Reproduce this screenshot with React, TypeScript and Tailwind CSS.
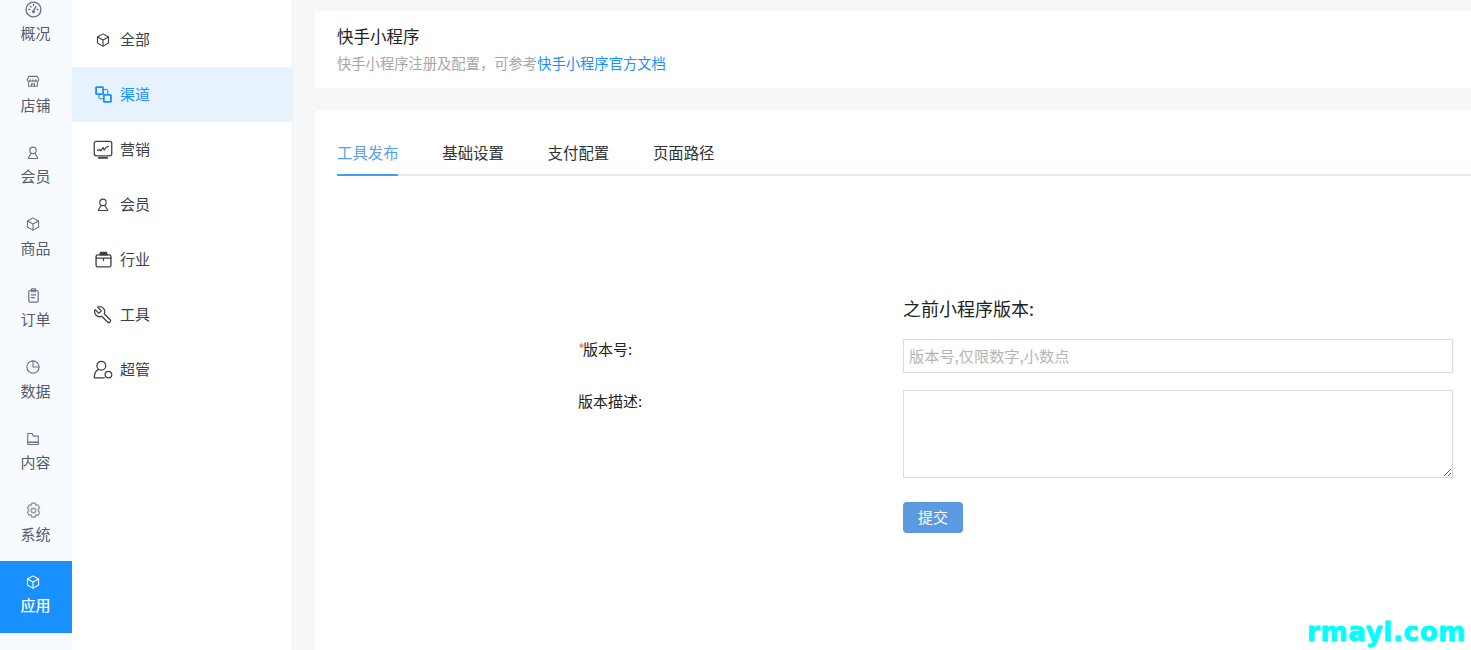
import { ReactNode } from "react";

const Svg = ({ children, className }: { children: ReactNode; className: string }) => (
  <svg
    viewBox="0 0 24 24"
    fill="none"
    stroke="currentColor"
    strokeWidth="1.9"
    strokeLinecap="round"
    strokeLinejoin="round"
    className={className}
  >
    {children}
  </svg>
);

const GaugeIcon = ({ className }: { className: string }) => (
  <Svg className={className}>
    <circle cx="12" cy="12" r="10.500" />
    <path d="M12 14l3.500-6M5.500 12h1.500M17 12h1.500M12 5v1.500M7.500 7.500l1 1" />
    <circle cx="12" cy="15" r="1.200" />
  </Svg>
);
const StoreIcon = ({ className }: { className: string }) => (
  <Svg className={className}>
    <path d="M5 4h14l3 6a2.500 2.500 0 0 1-5 0 2.500 2.500 0 0 1-5 0 2.500 2.500 0 0 1-5 0 2.500 2.500 0 0 1-5 0z" />
    <path d="M4.500 14v7h15v-7M9.500 21v-4h5v4" />
  </Svg>
);
const UserIcon = ({ className }: { className: string }) => (
  <Svg className={className}>
    <circle cx="12" cy="7.500" r="5.500" />
    <path d="M9 12.500L4 20.500a.6.6 0 0 0 .5 1h15a.6.6 0 0 0 .5-1l-5-8" />
  </Svg>
);
const BoxIcon = ({ className }: { className: string }) => (
  <Svg className={className}>
    <path d="M12 1.500l9.500 5.200v10.600L12 22.500l-9.500-5.200V6.700z" />
    <path d="M2.500 6.700l9.500 5.300 9.500-5.300M12 12v10.500" />
  </Svg>
);
const ClipboardIcon = ({ className }: { className: string }) => (
  <Svg className={className}>
    <rect x="4.500" y="4" width="15" height="18.500" rx="2" />
    <rect x="8.500" y="1.500" width="7" height="4.500" rx="1" />
    <path d="M8.500 11h7M8.500 15.500h5" />
  </Svg>
);
const PieIcon = ({ className }: { className: string }) => (
  <Svg className={className}>
    <circle cx="12" cy="12" r="10.500" />
    <path d="M12 1.500V12h10.500" />
  </Svg>
);
const FolderIcon = ({ className }: { className: string }) => (
  <Svg className={className}>
    <path d="M3 2.500h7.500l2 4.500H21v14.500H3z" />
    <path d="M3 17.500h18" strokeWidth="2.600" />
  </Svg>
);
const GearIcon = ({ className }: { className: string }) => (
  <Svg className={className}>
    <path d="M9.500 1.800h5l.8 3 2.800-.8 2.600 4.400-2.100 2.100v1.800l2.100 2.100-2.600 4.400-2.800-.8-.8 3.200h-5l-.8-3.200-2.800.8-2.600-4.400 2.100-2.100v-1.800L3.600 8.400 6.200 4l2.800.8z" />
    <circle cx="12" cy="12" r="3.200" />
  </Svg>
);
const ChannelIcon = ({ className }: { className: string }) => (
  <Svg className={className}>
    <rect x="1.500" y="1.500" width="10" height="10" rx="1" strokeWidth="2.600" />
    <rect x="12.500" y="12.500" width="10" height="10" rx="1" strokeWidth="2.600" />
    <path d="M12 5h4a2 2 0 0 1 2 2v5M5.500 12v4a2 2 0 0 0 2 2H12" strokeWidth="1.600" />
  </Svg>
);
const MonitorIcon = ({ className }: { className: string }) => (
  <Svg className={className}>
    <rect x="1.500" y="1.500" width="21" height="17.500" rx="2.500" strokeWidth="1.500" />
    <path d="M5.500 12.500l2.500-1 1.500 1.500 2.500-4 1.500 3 2-3 3-1.500" strokeWidth="1.500" />
    <path d="M7 21.500h10" strokeWidth="2.200" />
  </Svg>
);
const CaseIcon = ({ className }: { className: string }) => (
  <Svg className={className}>
    <rect x="1.500" y="5.500" width="21" height="17" rx="2.500" />
    <path d="M7 5.500l.8-3.500h8.400l.8 3.500z" fill="currentColor" />
    <path d="M1.500 10h21M12 10v3.500" />
  </Svg>
);
const WrenchIcon = ({ className }: { className: string }) => (
  <Svg className={className}>
    <path
      transform="matrix(-1 0 0 1 24 0)"
      strokeWidth="1.500"
      d="M14.700 6.300a1 1 0 0 0 0 1.400l1.600 1.600a1 1 0 0 0 1.400 0l3.770-3.770a6 6 0 0 1-7.940 7.940l-6.910 6.910a2.120 2.120 0 0 1-3-3l6.910-6.910a6 6 0 0 1 7.940-7.940l-3.760 3.760z"
    />
  </Svg>
);
const AdminIcon = ({ className }: { className: string }) => (
  <Svg className={className}>
    <circle cx="10" cy="6.800" r="5.300" strokeWidth="1.500" />
    <path d="M6.500 11.500C3.500 12.800 1.500 16.500 1.500 21.500h12" strokeWidth="1.500" />
    <circle cx="18.500" cy="17.500" r="4" strokeWidth="1.500" />
  </Svg>
);

const railItems = [
  { label: "概况", icon: GaugeIcon, size: "h-[17px] w-[17px]" },
  { label: "店铺", icon: StoreIcon, size: "h-[14px] w-[14px]" },
  { label: "会员", icon: UserIcon, size: "h-[14px] w-[14px]" },
  { label: "商品", icon: BoxIcon, size: "h-[14px] w-[14px]" },
  { label: "订单", icon: ClipboardIcon, size: "h-[15px] w-[15px]" },
  { label: "数据", icon: PieIcon, size: "h-[14px] w-[14px]" },
  { label: "内容", icon: FolderIcon, size: "h-[14px] w-[14px]" },
  { label: "系统", icon: GearIcon, size: "h-[17px] w-[17px] opacity-70" },
  { label: "应用", icon: BoxIcon, size: "h-[14px] w-[14px]", active: true },
];

const subItems = [
  { label: "全部", icon: BoxIcon, size: "w-[14px] h-[14px]" },
  { label: "渠道", icon: ChannelIcon, size: "w-[17px] h-[17px]", active: true },
  { label: "营销", icon: MonitorIcon, size: "w-[20px] h-[20px]" },
  { label: "会员", icon: UserIcon, size: "w-[14px] h-[14px]" },
  { label: "行业", icon: CaseIcon, size: "w-[17px] h-[17px]" },
  { label: "工具", icon: WrenchIcon, size: "w-[20px] h-[20px]" },
  { label: "超管", icon: AdminIcon, size: "w-[20px] h-[20px]" },
];

const tabs = ["工具发布", "基础设置", "支付配置", "页面路径"];

export default function App() {
  return (
    <div className="relative flex h-[650px] w-full overflow-hidden bg-[#f6f7f9] font-['Noto_Sans_CJK_SC','Liberation_Sans',sans-serif] text-[#303133]">
      <aside className="w-[72px] shrink-0 bg-[#f7fbff]">
        <div className="-mt-[11px]">
          {railItems.map((item) => (
            <div
              key={item.label}
              className={`flex h-[71.5px] flex-col items-center justify-center pb-[5px] pr-[1px] text-[15px] leading-[20px] ${
                item.active ? "bg-[#1890ff] font-medium text-white" : "text-[#555b6b]"
              }`}
            >
              <span className="mb-[5px] mr-[5px] flex h-[17px] items-center justify-center">
                <item.icon className={`${item.size} ${item.active ? "text-white" : "text-[#6b7186]"}`} />
              </span>
              <span>{item.label}</span>
            </div>
          ))}
        </div>
      </aside>

      <nav className="w-[221px] shrink-0 border-r border-[#f0f1f4] bg-white pt-3">
        {subItems.map((item) => (
          <div
            key={item.label}
            className={`flex h-[55px] items-center text-[15px] ${
              item.active ? "bg-[#e6f3ff] text-[#1890ff]" : "text-[#3c3f46]"
            }`}
          >
            <span className="ml-[21px] mr-[7px] flex w-[20px] shrink-0 justify-center">
              <item.icon className={item.size} />
            </span>
            {item.label}
          </div>
        ))}
      </nav>

      <main className="min-w-0 flex-1 pl-[22px] pt-[11px]">
        <section className="h-[77px] bg-white pl-[22px] pt-[13px]">
          <h1 className="text-[16.500px] leading-[24px] text-[#222]">快手小程序</h1>
          <p className="mt-[3px] text-[14.300px] leading-[24px] text-[#a6a6a6]">
            快手小程序注册及配置，可参考<span className="text-[#1890ff]">快手小程序官方文档</span>
          </p>
        </section>

        <section className="mt-[22px] h-[540px] bg-white pl-[22px]">
          <div className="flex h-[66px] items-end gap-[44.300px] border-b-2 border-[#e4e7ed]">
            {tabs.map((tab, i) => (
              <div
                key={tab}
                className={`-mb-[2px] h-[46px] w-[61px] whitespace-nowrap border-b-2 text-[15.400px] leading-[44px] ${
                  i === 0 ? "border-[#409eff] text-[#5a9ef0]" : "border-transparent text-[#303133]"
                }`}
              >
                {tab}
              </div>
            ))}
          </div>

          <form className="ml-[241px] mt-[119px] grid grid-cols-[325px_550px]">
            <div />
            <div className="h-[27px] text-[18px] leading-[26px] text-[#222]">之前小程序版本:</div>

            <label className="mt-[16px] text-[15px] leading-[22px] text-[#222]">
              <span className="inline-block w-[5px] text-[#f56c6c]">*</span>版本号:
            </label>
            <input
              placeholder="版本号,仅限数字,小数点"
              className="mt-[17px] h-[34px] w-full border border-[#dcdcdc] px-[5px] pb-[2px] text-[15.200px] outline-none placeholder:text-[#b5b5b5]"
            />

            <label className="mt-[17px] text-[15px] leading-[22px] text-[#222]">版本描述:</label>
            <textarea className="mt-[17px] block h-[88px] w-full border border-[#dcdcdc] outline-none" />

            <div />
            <button
              type="button"
              className="mt-[24px] h-[31px] w-[60px] rounded-[4px] bg-[#5a9ae0] text-[15px] text-white"
            >
              提交
            </button>
          </form>
        </section>
      </main>

      <div className="absolute bottom-[5px] right-[5px] font-['DejaVu_Sans',sans-serif] text-[26px] font-bold leading-[26px] tracking-[0.7px] text-[#00ffff] [-webkit-text-stroke:0.900px_#00ffff]">
        rmayi.com
      </div>
    </div>
  );
}
